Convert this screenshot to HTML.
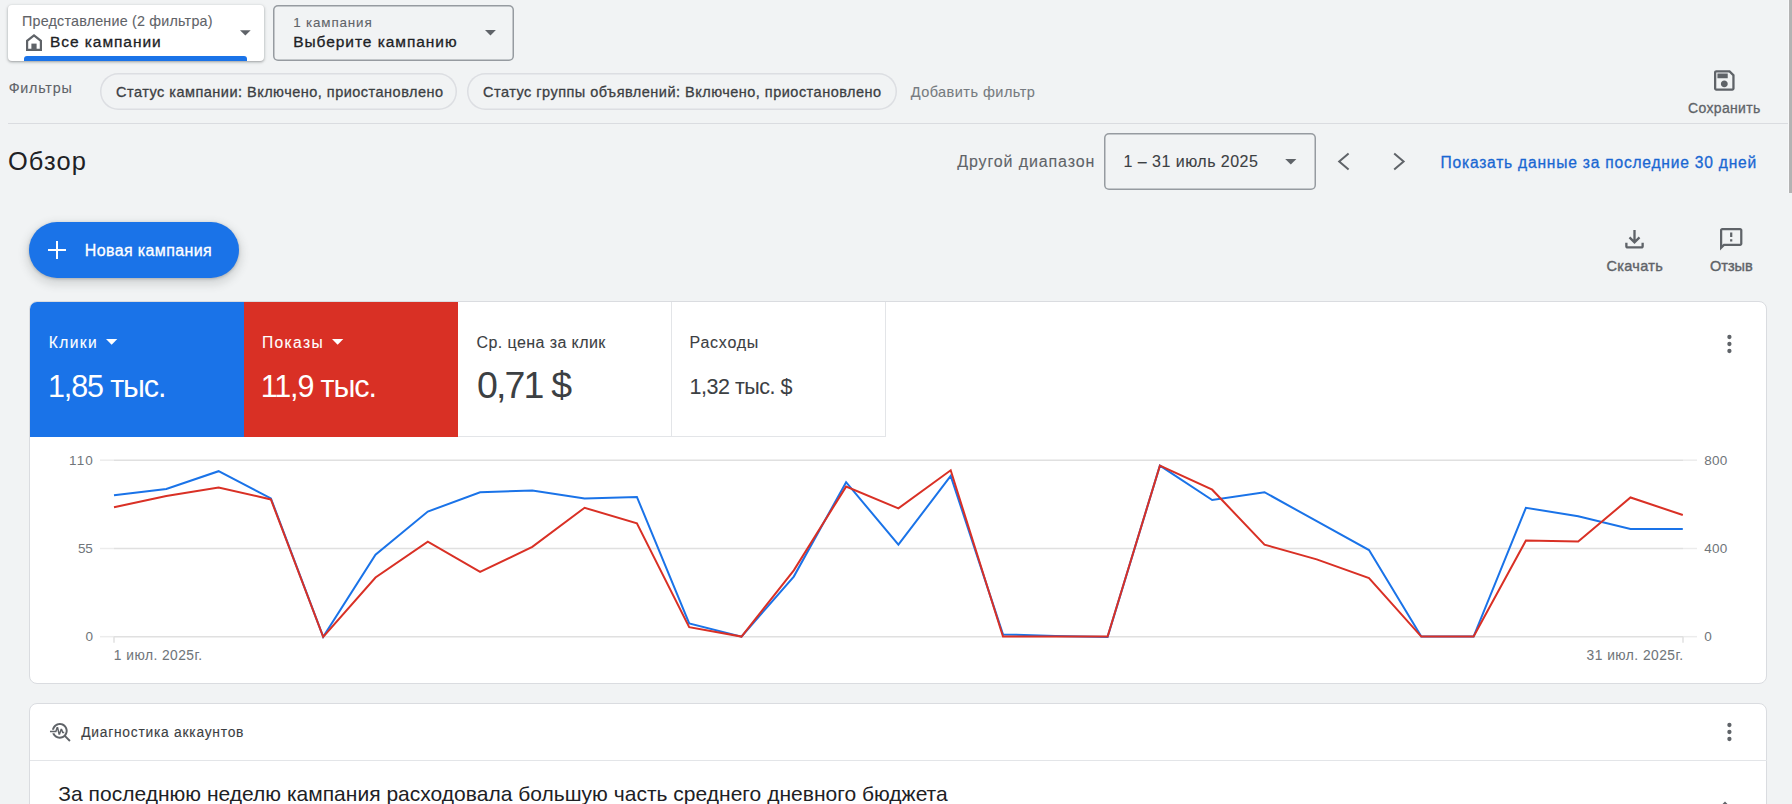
<!DOCTYPE html>
<html><head><meta charset="utf-8">
<style>
html,body{margin:0;padding:0;}
body{width:1792px;height:804px;overflow:hidden;background:#f1f3f4;position:relative;font-family:"Liberation Sans",sans-serif;}
.t{position:absolute;white-space:nowrap;}
.a{position:absolute;}
svg{position:absolute;overflow:visible;}
</style></head><body>
<!-- view card -->
<div class="a" style="left:8px;top:4.5px;width:256px;height:56px;background:#fff;border-radius:4px;box-shadow:0 1px 2px rgba(60,64,67,.3),0 1px 3px 1px rgba(60,64,67,.15);overflow:hidden"></div>
<div class="a" style="left:24.4px;top:55.8px;width:222.6px;height:5px;background:#1a73e8;border-radius:3px 3px 0 0"></div>
<svg style="left:26px;top:33.5px" width="16" height="17" viewBox="0 0 16 17"><path d="M1.1,15.9 V6.9 L8,1.4 L14.9,6.9 V15.9 Z" fill="none" stroke="#5f6368" stroke-width="2.2" stroke-linejoin="miter"/><rect x="5.4" y="9.6" width="5.2" height="7" fill="#5f6368"/></svg>
<svg style="left:239.9px;top:29.9px" width="10.7" height="5.7" viewBox="0 0 10 5"><path d="M0 0L5 5L10 0Z" fill="#5f6368"/></svg>
<!-- campaign select -->
<div class="a" style="left:272.8px;top:4.7px;width:241px;height:56.2px;border-radius:5px;box-shadow:inset 0 0 0 1.5px #969ba0"></div>
<svg style="left:484.5px;top:29.8px" width="10.9" height="5.7" viewBox="0 0 10 5"><path d="M0 0L5 5L10 0Z" fill="#5f6368"/></svg>
<!-- chips -->
<div class="a" style="left:100.2px;top:73.4px;width:357.3px;height:36.5px;border-radius:18.25px;box-shadow:inset 0 0 0 1.5px #dcdee2"></div>
<div class="a" style="left:467.4px;top:73.4px;width:429.5px;height:36.5px;border-radius:18.25px;box-shadow:inset 0 0 0 1.5px #dcdee2"></div>
<div class="a" style="left:8px;top:123px;width:1780px;height:1px;background:#dadce0"></div>
<!-- save icon -->
<svg style="left:1714px;top:69.7px" width="20.6" height="20.9" viewBox="120 -840 720 720"><path d="M200-120q-33 0-56.5-23.5T120-200v-560q0-33 23.5-56.5T200-840h480l160 160v480q0 33-23.5 56.5T760-120H200Zm560-526L646-760H200v560h560v-446ZM480-240q50 0 85-35t35-85q0-50-35-85t-85-35q-50 0-85 35t-35 85q0 50 35 85t85 35ZM240-560h360v-160H240v160Z" fill="#5f6368"/></svg>
<!-- scrollbar -->
<div class="a" style="left:1787.5px;top:0;width:1.5px;height:193px;background:#f7f8f9"></div><div class="a" style="left:1789px;top:0;width:3px;height:192.6px;background:#b3b3b3"></div>
<!-- date range -->
<div class="a" style="left:1104px;top:133.3px;width:211.8px;height:56.4px;border-radius:5px;box-shadow:inset 0 0 0 1.5px #969ba0"></div>
<svg style="left:1285.4px;top:159px" width="11.6" height="5.6" viewBox="0 0 10 5"><path d="M0 0L5 5L10 0Z" fill="#5f6368"/></svg>
<svg style="left:0;top:0" width="1792" height="804"><polyline points="1348.6,153.6 1339.2,161.6 1348.6,169.6" fill="none" stroke="#5f6368" stroke-width="2"/><polyline points="1394.2,153.6 1403.6,161.6 1394.2,169.6" fill="none" stroke="#5f6368" stroke-width="2"/></svg>

<!-- new campaign button -->
<div class="a" style="left:28.7px;top:222px;width:210.7px;height:55.7px;border-radius:28px;background:#1a73e8;box-shadow:0 1px 3px 0 rgba(60,64,67,.3),0 4px 8px 3px rgba(60,64,67,.15)"></div>
<div class="a" style="left:47.6px;top:249px;width:18.6px;height:2px;background:#fff"></div>
<div class="a" style="left:56px;top:240.6px;width:2px;height:18.4px;background:#fff"></div>
<!-- download / feedback -->
<svg style="left:1625px;top:229.9px" width="19" height="18.6" viewBox="160 -800 640 640"><path d="M480-320 280-520l56-58 104 104v-326h80v326l104-104 56 58-200 200ZM240-160q-33 0-56.5-23.5T160-240v-120h80v120h480v-120h80v120q0 33-23.5 56.5T720-160H240Z" fill="#5f6368"/></svg>
<svg style="left:1720.3px;top:228px" width="22.4" height="22.4" viewBox="2 2 20 20"><path d="M20 2H4c-1.1 0-1.99.9-1.99 2L2 22l4-4h14c1.1 0 2-.9 2-2V4c0-1.1-.9-2-2-2zm0 14H5.17L4 17.17V4h16v12zM11 12h2v2h-2zm0-6h2v4h-2z" fill="#5f6368"/></svg>
<!-- main card -->
<div class="a" style="box-sizing:border-box;left:29px;top:301px;width:1738px;height:383px;background:#fff;border:1px solid #dadce0;border-radius:8px"></div>
<div class="a" style="left:30px;top:302px;width:214px;height:135px;background:#1a73e8;border-radius:7px 0 0 0"></div>
<div class="a" style="left:244px;top:302px;width:214px;height:135px;background:#d93025"></div>
<div class="a" style="left:671px;top:302px;width:1px;height:135px;background:#e3e5e8"></div>
<div class="a" style="left:885px;top:302px;width:1px;height:135px;background:#e3e5e8"></div>
<div class="a" style="left:458px;top:436px;width:428px;height:1px;background:#e3e5e8"></div>
<svg style="left:105.6px;top:339.3px" width="11.3" height="5.7" viewBox="0 0 10 5"><path d="M0 0L5 5L10 0Z" fill="#fff"/></svg>
<svg style="left:332.3px;top:339.3px" width="11.3" height="5.7" viewBox="0 0 10 5"><path d="M0 0L5 5L10 0Z" fill="#fff"/></svg>
<svg style="left:1727px;top:335px" width="5" height="18" viewBox="0 0 5 18"><circle cx="2.4" cy="2" r="2.15" fill="#5f6368"/><circle cx="2.4" cy="9" r="2.15" fill="#5f6368"/><circle cx="2.4" cy="16" r="2.15" fill="#5f6368"/></svg>
<!-- chart -->
<svg style="left:0;top:0" width="1792" height="804" viewBox="0 0 1792 804">
  <g stroke="#ececec" stroke-width="1.5">
    <line x1="100" y1="460.2" x2="114" y2="460.2"/><line x1="1683" y1="460.2" x2="1697" y2="460.2"/>
    <line x1="100" y1="548.5" x2="114" y2="548.5"/><line x1="1683" y1="548.5" x2="1697" y2="548.5"/>
    <line x1="100" y1="636.7" x2="114" y2="636.7"/><line x1="1683" y1="636.7" x2="1697" y2="636.7"/>
  </g>
  <g stroke="#e0e0e0" stroke-width="1.5">
    <line x1="114" y1="460.2" x2="1683" y2="460.2"/>
    <line x1="114" y1="548.5" x2="1683" y2="548.5"/>
    <line x1="114" y1="636.7" x2="1683" y2="636.7"/>
    <line x1="114" y1="636.7" x2="114" y2="642.7"/>
    <line x1="1683" y1="636.7" x2="1683" y2="642.7"/>
  </g>
  <polyline points="114.0,495.3 166.3,489.0 218.6,471.2 270.9,498.4 323.2,636.9 375.5,554.7 427.8,511.6 480.1,492.2 532.3,490.6 584.6,498.4 636.9,496.9 689.2,623.4 741.5,636.6 793.8,576.6 846.1,482.2 898.4,544.7 950.7,475.9 1003.0,634.4 1055.3,636.0 1107.6,636.9 1159.9,465.6 1212.2,500.0 1264.5,492.2 1316.7,521.2 1369.0,550.0 1421.3,636.6 1473.6,636.6 1525.9,507.8 1578.2,516.2 1630.5,529.0 1682.8,529.0" fill="none" stroke="#1a73e8" stroke-width="2" stroke-linejoin="miter"/>
  <polyline points="114.0,507.2 166.3,496.0 218.6,487.5 270.9,499.4 323.2,636.9 375.5,577.5 427.8,541.6 480.1,571.9 532.3,546.9 584.6,507.8 636.9,523.4 689.2,627.2 741.5,636.6 793.8,570.3 846.1,486.6 898.4,508.4 950.7,470.3 1003.0,636.6 1055.3,636.6 1107.6,636.6 1159.9,465.6 1212.2,489.7 1264.5,544.7 1316.7,559.4 1369.0,578.1 1421.3,636.6 1473.6,636.6 1525.9,540.6 1578.2,541.6 1630.5,497.5 1682.8,515.0" fill="none" stroke="#d93025" stroke-width="2" stroke-linejoin="miter"/>
</svg>
<!-- diagnostics card -->
<div class="a" style="box-sizing:border-box;left:29px;top:703px;width:1738px;height:140px;background:#fff;border:1px solid #dadce0;border-radius:8px"></div>
<div class="a" style="left:30px;top:760px;width:1737px;height:1px;background:#e3e5e8"></div>
<svg style="left:49px;top:720.3px" width="23.6" height="23.6" viewBox="0 0 24 24"><path d="M22 20.59l-4.69-4.69C18.37 14.55 19 12.85 19 11c0-4.42-3.58-8-8-8-4.08 0-7.44 3.05-7.93 7h2.020C5.57 7.17 8.03 5 11 5c3.31 0 6 2.69 6 6s-2.69 6-6 6c-2.42 0-4.5-1.44-5.45-3.5H3.4C4.45 16.690 7.46 19 11 19c1.85 0 3.55-.63 4.9-1.69L20.59 22 22 20.59zM8.43 9.69 9.65 15h1.64l1.26-3.78.95 2.28h2V12h-.95l-1.25-3h-1.54l-1.12 3.38L9.350 7H7.7l-1.25 4H1v1.5h6.55z" fill="#5f6368"/></svg>
<svg style="left:1727px;top:723px" width="5" height="18" viewBox="0 0 5 18"><circle cx="2.4" cy="2" r="2.15" fill="#5f6368"/><circle cx="2.4" cy="9" r="2.15" fill="#5f6368"/><circle cx="2.4" cy="16" r="2.15" fill="#5f6368"/></svg>
<svg style="left:1716px;top:800px" width="18" height="12" viewBox="6 7 12 8"><path d="M12 8l-6 6 1.41 1.41L12 10.83l4.59 4.58L18 14z" fill="#5f6368"/></svg>
<div class="t" style="left:22.00px;top:13.99px;font-size:14.3px;line-height:14.3px;font-weight:400;color:#5f6368;letter-spacing:0.212px;-webkit-text-stroke:0.1px #5f6368;">Представление (2 фильтра)</div>
<div class="t" style="left:50.00px;top:34.28px;font-size:15.5px;line-height:15.5px;font-weight:400;color:#202124;letter-spacing:0.941px;-webkit-text-stroke:0.3px #202124;">Все кампании</div>
<div class="t" style="left:293.20px;top:15.65px;font-size:13.4px;line-height:13.4px;font-weight:400;color:#5f6368;letter-spacing:0.850px;-webkit-text-stroke:0.1px #5f6368;">1 кампания</div>
<div class="t" style="left:293.20px;top:34.28px;font-size:15.5px;line-height:15.5px;font-weight:400;color:#202124;letter-spacing:0.952px;-webkit-text-stroke:0.3px #202124;">Выберите кампанию</div>
<div class="t" style="left:8.70px;top:80.69px;font-size:14.3px;line-height:14.3px;font-weight:400;color:#5f6368;letter-spacing:0.779px;-webkit-text-stroke:0.1px #5f6368;">Фильтры</div>
<div class="t" style="left:116.00px;top:85.12px;font-size:14.5px;line-height:14.5px;font-weight:400;color:#3c4043;letter-spacing:0.487px;-webkit-text-stroke:0.3px #3c4043;">Статус кампании: Включено, приостановлено</div>
<div class="t" style="left:483.00px;top:85.12px;font-size:14.5px;line-height:14.5px;font-weight:400;color:#3c4043;letter-spacing:0.486px;-webkit-text-stroke:0.3px #3c4043;">Статус группы объявлений: Включено, приостановлено</div>
<div class="t" style="left:910.70px;top:84.72px;font-size:14.5px;line-height:14.5px;font-weight:400;color:#767b80;letter-spacing:0.460px;-webkit-text-stroke:0.1px #767b80;">Добавить фильтр</div>
<div class="t" style="left:1688.00px;top:101.15px;font-size:14px;line-height:14px;font-weight:400;color:#5f6368;letter-spacing:0.341px;-webkit-text-stroke:0.3px #5f6368;">Сохранить</div>
<div class="t" style="left:7.90px;top:148.79px;font-size:25.4px;line-height:25.4px;font-weight:400;color:#202124;letter-spacing:1.147px;">Обзор</div>
<div class="t" style="left:84.80px;top:242.65px;font-size:16px;line-height:16px;font-weight:400;color:#ffffff;letter-spacing:0.372px;-webkit-text-stroke:0.3px #ffffff;">Новая кампания</div>
<div class="t" style="left:957.30px;top:154.35px;font-size:16px;line-height:16px;font-weight:400;color:#5f6368;letter-spacing:0.876px;-webkit-text-stroke:0.1px #5f6368;">Другой диапазон</div>
<div class="t" style="left:1123.50px;top:154.25px;font-size:16px;line-height:16px;font-weight:400;color:#3c4043;letter-spacing:0.478px;-webkit-text-stroke:0.1px #3c4043;">1 – 31 июль 2025</div>
<div class="t" style="left:1440.50px;top:154.99px;font-size:15.6px;line-height:15.6px;font-weight:400;color:#1967d2;letter-spacing:0.777px;-webkit-text-stroke:0.3px #1967d2;">Показать данные за последние 30 дней</div>
<div class="t" style="left:1606.60px;top:258.72px;font-size:14.5px;line-height:14.5px;font-weight:400;color:#5f6368;letter-spacing:0.297px;-webkit-text-stroke:0.4px #5f6368;">Скачать</div>
<div class="t" style="left:1710.00px;top:258.72px;font-size:14.5px;line-height:14.5px;font-weight:400;color:#5f6368;letter-spacing:0.003px;-webkit-text-stroke:0.4px #5f6368;">Отзыв</div>
<div class="t" style="left:48.70px;top:334.59px;font-size:15.6px;line-height:15.6px;font-weight:400;color:#ffffff;letter-spacing:1.396px;-webkit-text-stroke:0.1px #ffffff;">Клики</div>
<div class="t" style="left:48.00px;top:370.78px;font-size:30.5px;line-height:30.5px;font-weight:400;color:#ffffff;letter-spacing:-1.135px;">1,85 тыс.</div>
<div class="t" style="left:261.90px;top:334.59px;font-size:15.6px;line-height:15.6px;font-weight:400;color:#ffffff;letter-spacing:1.361px;-webkit-text-stroke:0.1px #ffffff;">Показы</div>
<div class="t" style="left:260.70px;top:370.78px;font-size:30.5px;line-height:30.5px;font-weight:400;color:#ffffff;letter-spacing:-1.127px;">11,9 тыс.</div>
<div class="t" style="left:476.50px;top:335.25px;font-size:16px;line-height:16px;font-weight:400;color:#3c4043;letter-spacing:0.417px;-webkit-text-stroke:0.1px #3c4043;">Ср. цена за клик</div>
<div class="t" style="left:477.00px;top:367.05px;font-size:37.5px;line-height:37.5px;font-weight:400;color:#3c4043;letter-spacing:-1.841px;">0,71 $</div>
<div class="t" style="left:689.50px;top:335.25px;font-size:16px;line-height:16px;font-weight:400;color:#3c4043;letter-spacing:0.760px;-webkit-text-stroke:0.1px #3c4043;">Расходы</div>
<div class="t" style="left:689.50px;top:376.50px;font-size:21.5px;line-height:21.5px;font-weight:400;color:#3c4043;letter-spacing:-0.472px;-webkit-text-stroke:0.05px #3c4043;">1,32 тыс. $</div>
<div class="t" style="left:69.00px;top:453.77px;font-size:13.5px;line-height:13.5px;font-weight:400;color:#70757a;letter-spacing:1.143px;">110</div>
<div class="t" style="left:78.00px;top:542.07px;font-size:13.5px;line-height:13.5px;font-weight:400;color:#70757a;letter-spacing:-0.208px;">55</div>
<div class="t" style="left:85.40px;top:630.37px;font-size:13.5px;line-height:13.5px;font-weight:400;color:#70757a;letter-spacing:0.000px;">0</div>
<div class="t" style="left:1704.20px;top:453.77px;font-size:13.5px;line-height:13.5px;font-weight:400;color:#70757a;letter-spacing:0.292px;">800</div>
<div class="t" style="left:1704.20px;top:542.07px;font-size:13.5px;line-height:13.5px;font-weight:400;color:#70757a;letter-spacing:0.292px;">400</div>
<div class="t" style="left:1704.20px;top:630.37px;font-size:13.5px;line-height:13.5px;font-weight:400;color:#70757a;letter-spacing:0.000px;">0</div>
<div class="t" style="left:113.80px;top:649.12px;font-size:13.8px;line-height:13.8px;font-weight:400;color:#70757a;letter-spacing:0.457px;-webkit-text-stroke:0.05px #70757a;">1 июл. 2025г.</div>
<div class="t" style="left:1586.60px;top:649.12px;font-size:13.8px;line-height:13.8px;font-weight:400;color:#70757a;letter-spacing:0.462px;-webkit-text-stroke:0.05px #70757a;">31 июл. 2025г.</div>
<div class="t" style="left:81.20px;top:725.92px;font-size:13.8px;line-height:13.8px;font-weight:400;color:#3c4043;letter-spacing:0.758px;-webkit-text-stroke:0.12px #3c4043;">Диагностика аккаунтов</div>
<div class="t" style="left:58.30px;top:783.22px;font-size:21px;line-height:21px;font-weight:400;color:#202124;letter-spacing:0.016px;">За последнюю неделю кампания расходовала большую часть среднего дневного бюджета</div>
</body></html>
